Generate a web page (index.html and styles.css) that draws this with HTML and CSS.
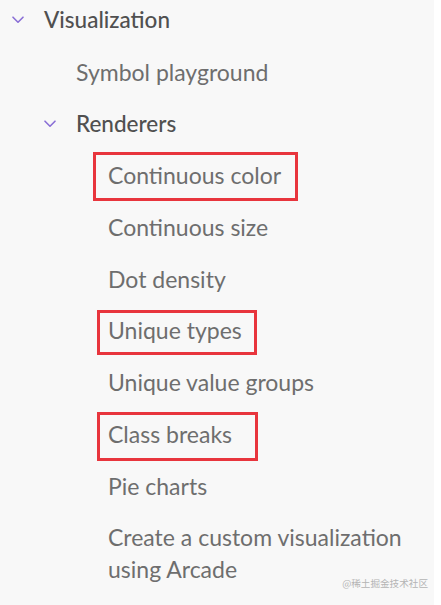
FILE: index.html
```html
<!DOCTYPE html>
<html>
<head>
<meta charset="utf-8">
<link rel="stylesheet" href="styles.css">
</head>
<body>
<div class="panel">
  <ul class="tree">
    <li class="node">
      <div class="row group"><span class="chev"><svg width="12" height="8" viewBox="0 0 12 8"><path d="M1 1.2 L6 6.2 L11 1.2" fill="none" stroke="#8a6fd6" stroke-width="1.6" stroke-linecap="round" stroke-linejoin="round"/></svg></span><span class="label">Visualization</span></div>
      <ul class="tree sub">
        <li class="row leaf"><span class="label">Symbol playground</span></li>
        <li class="node">
          <div class="row group"><span class="chev"><svg width="12" height="8" viewBox="0 0 12 8"><path d="M1 1.2 L6 6.2 L11 1.2" fill="none" stroke="#8a6fd6" stroke-width="1.6" stroke-linecap="round" stroke-linejoin="round"/></svg></span><span class="label">Renderers</span></div>
          <ul class="tree sub2">
            <li class="row leaf"><span class="label mark mark-a">Continuous color</span></li>
            <li class="row leaf"><span class="label">Continuous size</span></li>
            <li class="row leaf"><span class="label">Dot density</span></li>
            <li class="row leaf"><span class="label mark mark-b">Unique types</span></li>
            <li class="row leaf"><span class="label">Unique value groups</span></li>
            <li class="row leaf"><span class="label mark mark-c">Class breaks</span></li>
            <li class="row leaf"><span class="label">Pie charts</span></li>
            <li class="row leaf multi"><span class="line">Create a custom visualization</span><span class="line">using Arcade</span></li>
          </ul>
        </li>
      </ul>
    </li>
  </ul>
  <div class="watermark">@稀土掘金技术社区</div>
</div>
</body>
</html>
```

FILE: styles.css
```css
html, body {
  margin: 0;
  padding: 0;
  background: #ffffff;
}

.panel {
  position: relative;
  width: 434px;
  height: 605px;
  background: #f8f8f8;
  overflow: hidden;
  font-family: Lato, "Open Sans", sans-serif;
  font-size: 23px;
  color: #6e6e6e;
}

.tree {
  list-style: none;
  margin: 0;
  padding: 0;
}

.panel > .tree {
  margin-top: -5.5px;
  padding-left: 44px;
}

.sub, .sub2 {
  padding-left: 32px;
}

.row {
  display: flex;
  align-items: flex-start;
  padding: 9.85px 0;
  line-height: 32px;
}

.multi {
  flex-direction: column;
}

.line {
  display: block;
}

.group {
  margin-left: -32px;
  color: #505050;
  font-weight: 500;
  font-size: 22.5px;
}

.chev {
  width: 32px;
  flex: none;
  display: flex;
  align-items: center;
  height: 32px;
  padding-left: 0;
  box-sizing: border-box;
}

.chev svg {
  display: block;
}

.label {
  position: relative;
}

.mark::after {
  content: "";
  position: absolute;
  border: 3px solid #e8353d;
}

.mark-a::after {
  left: -15px;
  top: -7.5px;
  width: 199px;
  height: 43px;
}

.mark-b::after {
  left: -11px;
  top: -4.5px;
  width: 154px;
  height: 39px;
}

.mark-c::after {
  left: -11px;
  top: -5.5px;
  width: 155px;
  height: 43px;
}

.watermark {
  position: absolute;
  right: 6px;
  bottom: 15px;
  font-family: "Noto Sans CJK SC", sans-serif;
  font-size: 9.6px;
  color: #b4b4b4;
}
```
